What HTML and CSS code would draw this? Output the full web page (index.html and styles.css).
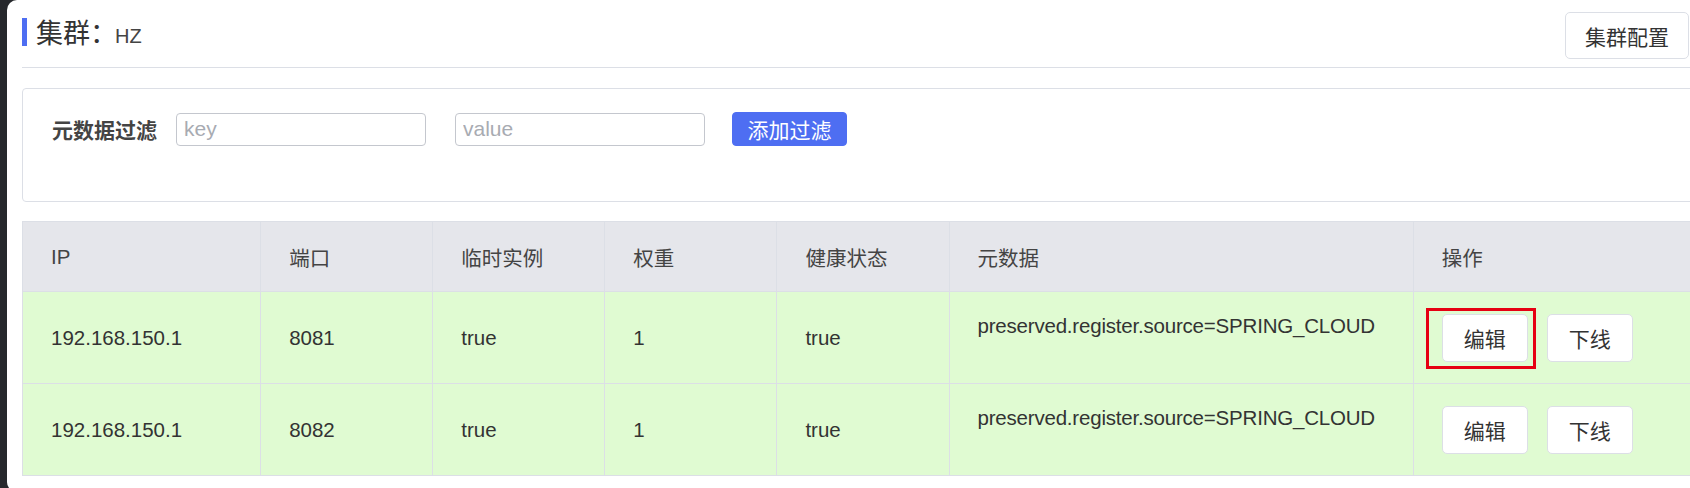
FILE: index.html
```html
<!DOCTYPE html>
<html lang="zh-CN">
<head>
    <meta charset="UTF-8">
    <meta name="viewport" content="width=device-width, initial-scale=1.0">
    <title>集群 - 实例列表</title>
    <link rel="stylesheet" href="styles.css">
</head>
<body>
    <div class="page">
        <div class="content">
            <div class="page-header">
                <h2 class="cluster-title">
                    <span class="title-mark"></span>
                    <span class="title-text">集群：<small>HZ</small></span>
                </h2>
                <button class="btn btn-config">集群配置</button>
            </div>

            <div class="filter-box">
                <label class="filter-label">元数据过滤</label>
                <input type="text" class="filter-input" placeholder="key">
                <input type="text" class="filter-input filter-value" placeholder="value">
                <button class="btn btn-primary btn-add">添加过滤</button>
            </div>

            <table class="instance-table">
                <colgroup>
                    <col class="col-ip">
                    <col class="col-small">
                    <col class="col-small">
                    <col class="col-small">
                    <col class="col-small">
                    <col class="col-meta">
                    <col class="col-ops">
                </colgroup>
                <thead>
                    <tr>
                        <th>IP</th>
                        <th>端口</th>
                        <th>临时实例</th>
                        <th>权重</th>
                        <th>健康状态</th>
                        <th>元数据</th>
                        <th>操作</th>
                    </tr>
                </thead>
                <tbody>
                    <tr>
                        <td>192.168.150.1</td>
                        <td>8081</td>
                        <td>true</td>
                        <td>1</td>
                        <td>true</td>
                        <td><div class="meta">preserved.register.source=SPRING_CLOUD</div></td>
                        <td>
                            <div class="ops">
                                <span class="marked"><button class="btn btn-row">编辑</button></span>
                                <button class="btn btn-row">下线</button>
                            </div>
                        </td>
                    </tr>
                    <tr>
                        <td>192.168.150.1</td>
                        <td>8082</td>
                        <td>true</td>
                        <td>1</td>
                        <td>true</td>
                        <td><div class="meta">preserved.register.source=SPRING_CLOUD</div></td>
                        <td>
                            <div class="ops">
                                <button class="btn btn-row">编辑</button>
                                <button class="btn btn-row">下线</button>
                            </div>
                        </td>
                    </tr>
                </tbody>
            </table>
        </div>
    </div>
</body>
</html>
```

FILE: styles.css
```css
body {
    margin: 0;
    height: 488px;
    overflow: hidden;
    background: #26282c;
    font-family: "Liberation Sans", "Noto Sans CJK SC", sans-serif;
    color: #333;
}
.page {
    margin-left: 7px;
    height: 492px;
    padding-left: 15px;
    background: #fff;
    border-radius: 10px 0 0 10px;
    overflow: hidden;
}
.content {
    width: 1676px;
}

/* cabecera */
.page-header {
    display: flex;
    justify-content: space-between;
    align-items: flex-start;
    padding: 12px 9px 8px 0;
    border-bottom: 1px solid #dcdfe6;
}
.cluster-title {
    display: flex;
    align-items: center;
    height: 28px;
    margin: 6px 0 0;
    font-size: 27px;
    font-weight: normal;
    color: #333;
}
.title-mark {
    width: 5px;
    height: 28px;
    margin-right: 9px;
    background: #4e6ef2;
}
.title-text {
    padding-top: 6px;
    line-height: 28px;
}
.title-text small {
    margin-left: -2px;
    font-size: 20px;
    color: #444;
}

/* botones */
.btn {
    font-family: inherit;
    font-size: 21px;
    color: #333;
    background: #fff;
    border: 1px solid #dcdfe6;
    border-radius: 5px;
    cursor: pointer;
}
.btn-config {
    height: 47px;
    padding: 0 19px;
}
.btn-primary {
    background: #4e6ef2;
    border-color: #4e6ef2;
    color: #fff;
}
.btn-add {
    width: 115px;
    height: 34px;
    padding: 0;
    border-radius: 4px;
}
.btn-row {
    width: 86px;
    height: 48px;
    padding: 0;
}

/* filtro */
.filter-box {
    display: flex;
    align-items: center;
    margin-top: 20px;
    padding: 23px 29px 55px;
    border: 1px solid #dcdfe6;
    border-radius: 4px;
}
.filter-label {
    width: 124px;
    font-size: 21px;
    font-weight: bold;
    color: #444;
}
.filter-input {
    box-sizing: border-box;
    width: 250px;
    height: 33px;
    padding: 0 7px;
    font-family: inherit;
    font-size: 21px;
    color: #333;
    border: 1px solid #c4c7ce;
    border-radius: 4px;
    outline: none;
}
.filter-input::placeholder {
    color: #a8abb2;
}
.filter-value {
    margin-left: 29px;
    margin-right: 27px;
}

/* tabla */
.instance-table {
    margin-top: 19px;
    width: 1692px;
    table-layout: fixed;
    border-collapse: collapse;
    font-size: 20.5px;
}
.col-ip { width: 238px; }
.col-small { width: 172px; }
.col-meta { width: 464px; }
.col-ops { width: 300px; }
.instance-table th,
.instance-table td {
    padding: 0 28px;
    text-align: left;
    border: 1px solid #dcdfe6;
}
.instance-table th {
    height: 69px;
    background: #e5e6eb;
    font-weight: normal;
    color: #444;
}
.instance-table td {
    height: 91px;
    background: #e0fbd2;
    color: #333;
}
.meta {
    margin-bottom: 23px;
    letter-spacing: -0.2px;
}
.ops {
    display: flex;
    align-items: center;
    gap: 19px;
}
.marked {
    position: relative;
    display: inline-flex;
}
.marked::after {
    content: "";
    position: absolute;
    left: -16px;
    right: -8px;
    top: -6px;
    bottom: -7px;
    border: 3px solid #e60012;
}
```
